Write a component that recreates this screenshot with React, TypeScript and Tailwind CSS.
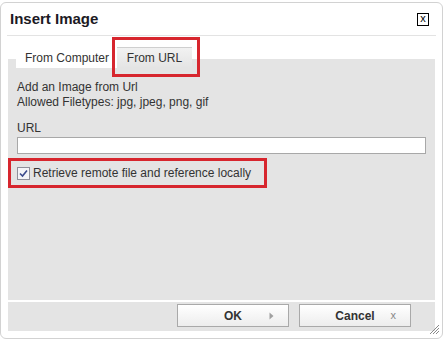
function ResizeGrip() {
  return (
    <svg width="12" height="12" viewBox="0 0 12 12" className="absolute right-[2px] bottom-[3px]">
      <path d="M11 2 L2 11 M11 5 L5 11 M11 8 L8 11" stroke="#8a8a8a" strokeWidth="1" />
    </svg>
  );
}

function Button({ label, icon }: { label: string; icon: "arrow" | "x" }) {
  return (
    <button className="relative w-[112px] h-[23px] border border-[#a9a9a9] bg-[linear-gradient(to_bottom,#ffffff,#ededed)] text-[12px] font-bold text-[#333]">
      {label}
      <span className="absolute right-[14px] top-0 h-full flex items-center">
        {icon === "arrow" ? (
          <svg width="5" height="8" viewBox="0 0 5 8">
            <path d="M0.5 0.5 L4.5 4 L0.5 7.5 Z" fill="#a0a0a0" />
          </svg>
        ) : (
          <span className="text-[11px] font-normal text-[#888] leading-none">x</span>
        )}
      </span>
    </button>
  );
}

export default function App() {
  return (
    <div className="w-[445px] h-[340px] bg-white pt-[2px] font-['Liberation_Sans',Arial,sans-serif] text-[12px] text-[#333]">
      <div className="relative w-[443px] h-[337px] border border-[#d2d2d2] rounded-[6px] bg-white flex flex-col">
        <div className="mx-[6px] h-[33px] border-b border-[#e3e3e3] flex items-center justify-between pt-[1px]">
          <h1 className="pl-[3px] text-[15px] font-bold text-[#1c1a24]">Insert Image</h1>
          <div className="mr-[7px] w-[12px] h-[13px] border border-black flex items-center justify-center text-[11px] leading-none text-black pb-[2px]">
            x
          </div>
        </div>

        <div className="mx-[7px] pt-[11px] pl-[8px] flex bg-[linear-gradient(to_bottom,#ffffff_23px,#e4e4e4_23px)]">
          <div className="w-[101px] h-[21px] bg-white pl-[9px] flex items-center">From Computer</div>
          <div className="relative w-[75px] h-[21px] border-t border-[#cfcfcf] bg-[linear-gradient(to_bottom,#f2f2f2,#e4e4e4)] flex items-center justify-center">
            From URL
            <div className="absolute -left-[5px] -right-[8px] -top-[11px] -bottom-[9px] border-[3px] border-[#d7262e]" />
          </div>
        </div>

        <div className="mx-[7px] h-[232px] bg-[#e4e4e4] pt-[12px] flex flex-col">
          <div className="px-[9px] leading-[15px]">
            <p>Add an Image from Url</p>
            <p>Allowed Filetypes: jpg, jpeg, png, gif</p>
          </div>
          <label className="px-[9px] mt-[11px] leading-[15px]">URL</label>
          <input className="mx-[9px] mt-[1px] h-[17px] border border-[#a8a8a8] bg-white outline-none" />
          <div className="mt-[4px] w-[259px] h-[30px] border-[3px] border-[#d7262e] pl-[6px] flex items-center gap-[3px]">
            <svg width="13" height="13" viewBox="0 0 13 13">
              <rect x="0.5" y="0.5" width="12" height="12" fill="#f4f4f8" stroke="#8f8f9a" />
              <path d="M3 6.5 L5.5 9 L10 3.5" stroke="#3b4a8c" strokeWidth="1.6" fill="none" />
            </svg>
            <span className="text-[12px]">Retrieve remote file and reference locally</span>
          </div>
        </div>

        <div className="mx-[7px] mt-[2px] h-[29px] bg-[#e4e4e4] flex justify-end items-start pt-[2px] pr-[24px] gap-[10px]">
          <Button label="OK" icon="arrow" />
          <Button label="Cancel" icon="x" />
        </div>

        <ResizeGrip />
      </div>
    </div>
  );
}
